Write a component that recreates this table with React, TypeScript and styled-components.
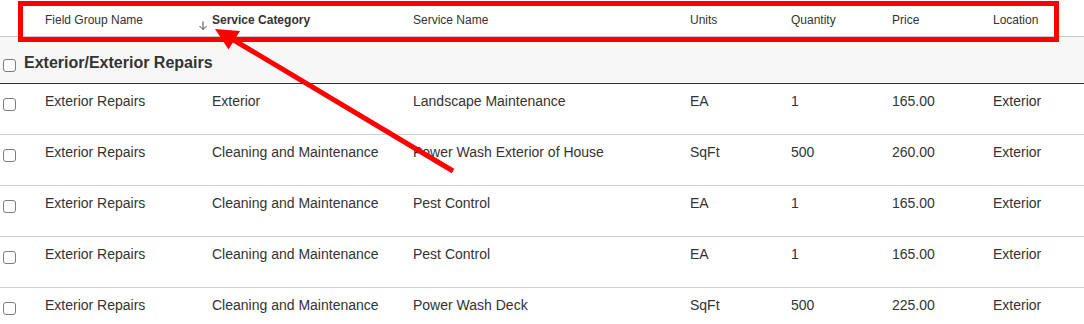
import styled, { createGlobalStyle } from 'styled-components';

const GlobalStyle = createGlobalStyle`
  html, body {
    margin: 0;
    padding: 0;
    overflow: hidden;
    background: #ffffff;
  }

  body {
    font-family: "Liberation Sans", Arial, Helvetica, sans-serif;
    color: #333333;
  }
`;

const COLUMNS = '45px 167px 201px 277px 101px 101px 101px 1fr';

const Page = styled.div`
  position: relative;
  width: 1084px;
`;

const HeaderRow = styled.div`
  display: grid;
  grid-template-columns: ${COLUMNS};
  box-sizing: border-box;
  height: 37px;
  padding-top: 13px;
  border-bottom: 1px solid #c8c8c8;
  font-size: 12px;
  line-height: normal;
`;

const HeaderCell = styled.div<{ $sorted?: boolean }>`
  display: flex;
  align-items: flex-start;
  gap: 4px;
  font-weight: ${(props) => (props.$sorted ? 'bold' : 'normal')};
  margin-left: ${(props) => (props.$sorted ? '-14px' : '0')};
  white-space: nowrap;

  svg {
    margin-top: 8px;
    flex-shrink: 0;
  }
`;

const GroupRow = styled.div`
  display: flex;
  align-items: flex-start;
  gap: 8px;
  box-sizing: border-box;
  height: 47px;
  padding: 16px 0 0 3px;
  background: #f7f7f7;
  border-bottom: 1px solid #333333;
`;

const GroupTitle = styled.h3`
  margin: 0;
  font-size: 16px;
  line-height: 20px;
  font-weight: bold;
`;

const Row = styled.div`
  display: grid;
  grid-template-columns: ${COLUMNS};
  box-sizing: border-box;
  height: 51px;
  padding-top: 7px;
  border-bottom: 1px solid #d0d0d0;
  font-size: 14px;
  line-height: 20px;
`;

const CheckCell = styled.div`
  padding-left: 3px;
`;

const Cell = styled.div`
  white-space: nowrap;
`;

const Checkbox = styled.input.attrs({ type: 'checkbox' })<{ $offset: number }>`
  appearance: none;
  display: block;
  box-sizing: border-box;
  width: 13px;
  height: 13px;
  margin: ${(props) => props.$offset}px 0 0 0;
  border: 1px solid #7d7d7d;
  border-radius: 3px;
  background: #ffffff;
`;

const Highlight = styled.div`
  position: absolute;
  left: 18px;
  top: 1px;
  width: 1041px;
  height: 41px;
  box-sizing: border-box;
  border: 5px solid #ff0000;
  pointer-events: none;
`;

const Pointer = styled.svg`
  position: absolute;
  left: 0;
  top: 0;
  pointer-events: none;
`;

const SortDown = () => (
  <svg width="10" height="9" viewBox="0 0 10 9" fill="none" stroke="#444" strokeWidth="1">
    <path d="M5 0.5v8M1.5 5l3.5 3.5 3.5-3.5" />
  </svg>
);

const headers = [
  '',
  'Field Group Name',
  'Service Category',
  'Service Name',
  'Units',
  'Quantity',
  'Price',
  'Location',
];

const rows = [
  ['Exterior Repairs', 'Exterior', 'Landscape Maintenance', 'EA', '1', '165.00', 'Exterior'],
  ['Exterior Repairs', 'Cleaning and Maintenance', 'Power Wash Exterior of House', 'SqFt', '500', '260.00', 'Exterior'],
  ['Exterior Repairs', 'Cleaning and Maintenance', 'Pest Control', 'EA', '1', '165.00', 'Exterior'],
  ['Exterior Repairs', 'Cleaning and Maintenance', 'Pest Control', 'EA', '1', '165.00', 'Exterior'],
  ['Exterior Repairs', 'Cleaning and Maintenance', 'Power Wash Deck', 'SqFt', '500', '225.00', 'Exterior'],
];

export default function App() {
  return (
    <Page>
      <GlobalStyle />
      <HeaderRow>
        {headers.map((label, i) =>
          label === 'Service Category' ? (
            <HeaderCell key={i} $sorted>
              <SortDown />
              {label}
            </HeaderCell>
          ) : (
            <HeaderCell key={i}>{label}</HeaderCell>
          ),
        )}
      </HeaderRow>

      <GroupRow>
        <Checkbox $offset={6} />
        <GroupTitle>Exterior/Exterior Repairs</GroupTitle>
      </GroupRow>

      {rows.map((row, i) => (
        <Row key={i}>
          <CheckCell>
            <Checkbox $offset={7} />
          </CheckCell>
          {row.map((value, j) => (
            <Cell key={j}>{value}</Cell>
          ))}
        </Row>
      ))}

      <Highlight />
      <Pointer width="1084" height="324" viewBox="0 0 1084 324">
        <line x1="453" y1="171" x2="232" y2="39" stroke="#ff0000" strokeWidth="5" />
        <polygon points="215,29 228.5,49.5 240,31" fill="#ff0000" />
      </Pointer>
    </Page>
  );
}
